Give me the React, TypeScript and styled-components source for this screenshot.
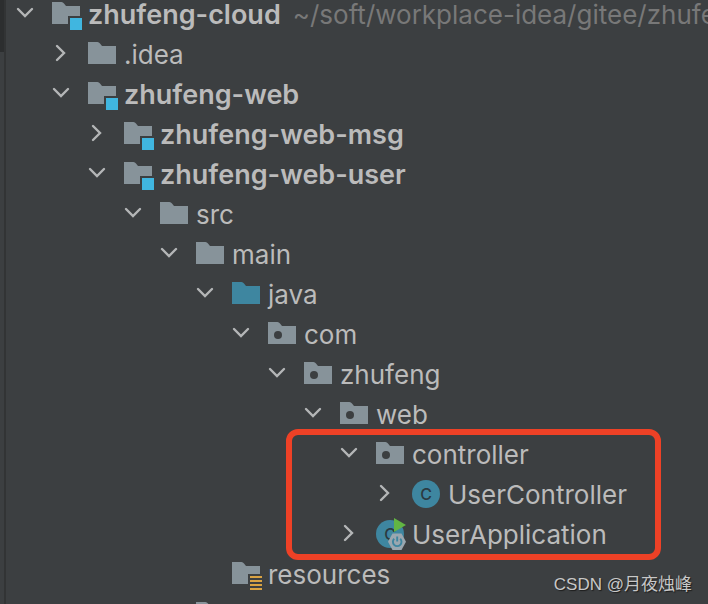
import React from "react";
import styled, { createGlobalStyle } from "styled-components";

const GlobalStyle = createGlobalStyle`
  * { box-sizing: border-box; }
  body {
    margin: 0;
    background: #3c3f41;
    color: #bbbbbb;
    font-family: Inter, "Noto Sans", sans-serif;
    font-size: 26px;
    line-height: 40px;
  }
`;

const Window = styled.main`
  display: flex;
  height: 100vh;
  overflow: hidden;
  position: relative;
`;

const Stripe = styled.aside`
  display: flex;
  flex-direction: column;
  flex: 0 0 6px;
  border-right: 2px solid #323435;
`;

const StripeTab = styled.div`
  height: 52px;
  background: #2c2e2f;
`;

const Tree = styled.ul`
  flex: 1;
  min-width: 0;
  margin: -6px 0 0;
  padding: 0;
  list-style: none;
`;

const Row = styled.li<{ $level: number }>`
  display: flex;
  align-items: center;
  height: 40px;
  padding-left: ${(p) => 3 + p.$level * 36}px;
  white-space: nowrap;
`;

const Toggle = styled.button`
  flex: none;
  width: 32px;
  height: 32px;
  margin-right: 9px;
  padding: 0;
  border: 0;
  background: none;
  color: #b4b6b7;
  cursor: pointer;
`;

const ToggleSpace = styled.span`
  flex: none;
  width: 41px;
`;

const Glyph = styled.svg`
  display: block;
  flex: none;
  width: 32px;
  height: 32px;
`;

const Letter = styled.text`
  font-family: Inter, sans-serif;
  font-size: 16px;
  font-weight: 500;
  text-anchor: middle;
  fill: #2b3a41;
`;

const Name = styled.span<{ $bold?: boolean }>`
  margin-left: 6px;
  padding-top: 2px;
  font-size: ${(p) => (p.$bold ? 27 : 26)}px;
  font-weight: ${(p) => (p.$bold ? 600 : 400)};
`;

const Path = styled.span`
  margin-left: 12px;
  padding-top: 2px;
  color: #787878;
`;

const Highlighted = styled.li`
  position: relative;
`;

const Group = styled.ul`
  margin: 0;
  padding: 0;
  list-style: none;
`;

const Frame = styled.div`
  position: absolute;
  top: -5px;
  bottom: -6px;
  left: 280px;
  width: 375px;
  border: 6px solid #ee4126;
  border-radius: 12px;
  pointer-events: none;
`;

const Watermark = styled.div`
  position: absolute;
  right: 16px;
  bottom: 6px;
  font-family: "Liberation Sans", "Noto Sans CJK SC", sans-serif;
  font-size: 17px;
  line-height: 26px;
  color: #c8c8c8;
  text-shadow: 1px 1px 1px #1c1c1c;
`;

type Kind = "folder" | "module" | "source" | "package" | "resources" | "class" | "application";

type Item = {
  name: string;
  level: number;
  kind: Kind;
  state?: "open" | "closed";
  path?: string;
};

const FOLDER = "M2 4H11.5Q13 4 14 5.5L16 8H30V26H2Z";

function Icon({ kind }: { kind: Kind }) {
  if (kind === "class") {
    return (
      <Glyph viewBox="0 0 32 32" aria-hidden="true">
        <circle cx="16" cy="16" r="14" fill="#3e86a0" />
        <Letter x="16" y="22">C</Letter>
      </Glyph>
    );
  }
  if (kind === "application") {
    return (
      <Glyph viewBox="0 0 32 32" aria-hidden="true">
        <circle cx="16" cy="16" r="14" fill="#3e86a0" />
        <Letter x="16" y="22">C</Letter>
        <path d="M20 0V14L32 7Z" fill="#62b543" />
        <path d="M18.5 15.5H27.5L32 23.75L27.5 32H18.5L14 23.75Z" fill="#9aa7b0" />
        <path d="M20.2 20.7A4.3 4.3 0 1 0 26.2 20.7M23.2 18.5V23.5" fill="none" stroke="#3e86a0" strokeWidth="1.9" />
      </Glyph>
    );
  }
  return (
    <Glyph viewBox="0 0 32 32" aria-hidden="true">
      <path d={FOLDER} fill={kind === "source" ? "#3e86a0" : "#87939a"} />
      {kind === "package" && <circle cx="12" cy="17" r="4" fill="#3c3f41" />}
      {kind === "module" && (
        <>
          <path d="M18 18H32V32H18Z" fill="#3c3f41" />
          <path d="M20 20H32V32H20Z" fill="#40b6e0" />
        </>
      )}
      {kind === "resources" && (
        <>
          <path d="M18 16H32V32H18Z" fill="#3c3f41" />
          <path d="M20 19H32M20 23H32M20 27H32M20 31H32" stroke="#d9a343" strokeWidth="2" />
        </>
      )}
    </Glyph>
  );
}

function TreeRow({ item }: { item: Item }) {
  const open = item.state === "open";
  return (
    <Row $level={item.level}>
      {item.state ? (
        <Toggle type="button" aria-expanded={open} aria-label={item.name}>
          <Glyph viewBox="0 0 32 32" aria-hidden="true">
            <path
              d={open ? "M9 11L16 18L23 11" : "M12 8L19 15L12 22"}
              fill="none"
              stroke="currentColor"
              strokeWidth="2.4"
              strokeLinecap="round"
            />
          </Glyph>
        </Toggle>
      ) : (
        <ToggleSpace />
      )}
      <Icon kind={item.kind} />
      <Name $bold={item.kind === "module"}>{item.name}</Name>
      {item.path && <Path>{item.path}</Path>}
    </Row>
  );
}

const ancestors: Item[] = [
  { name: "zhufeng-cloud", level: 0, kind: "module", state: "open", path: "~/soft/workplace-idea/gitee/zhufeng-cloud" },
  { name: ".idea", level: 1, kind: "folder", state: "closed" },
  { name: "zhufeng-web", level: 1, kind: "module", state: "open" },
  { name: "zhufeng-web-msg", level: 2, kind: "module", state: "closed" },
  { name: "zhufeng-web-user", level: 2, kind: "module", state: "open" },
  { name: "src", level: 3, kind: "folder", state: "open" },
  { name: "main", level: 4, kind: "folder", state: "open" },
  { name: "java", level: 5, kind: "source", state: "open" },
  { name: "com", level: 6, kind: "package", state: "open" },
  { name: "zhufeng", level: 7, kind: "package", state: "open" },
  { name: "web", level: 8, kind: "package", state: "open" },
];

const highlighted: Item[] = [
  { name: "controller", level: 9, kind: "package", state: "open" },
  { name: "UserController", level: 10, kind: "class", state: "closed" },
  { name: "UserApplication", level: 9, kind: "application", state: "closed" },
];

const remaining: Item[] = [
  { name: "resources", level: 5, kind: "resources" },
  { name: "", level: 4, kind: "folder" },
];

export default function App() {
  return (
    <>
      <GlobalStyle />
      <Window>
        <Stripe>
          <StripeTab />
        </Stripe>
        <Tree>
          {ancestors.map((item) => (
            <TreeRow key={item.name} item={item} />
          ))}
          <Highlighted>
            <Group>
              {highlighted.map((item) => (
                <TreeRow key={item.name} item={item} />
              ))}
            </Group>
            <Frame />
          </Highlighted>
          {remaining.map((item) => (
            <TreeRow key={item.name} item={item} />
          ))}
        </Tree>
        <Watermark>CSDN @月夜烛峰</Watermark>
      </Window>
    </>
  );
}
